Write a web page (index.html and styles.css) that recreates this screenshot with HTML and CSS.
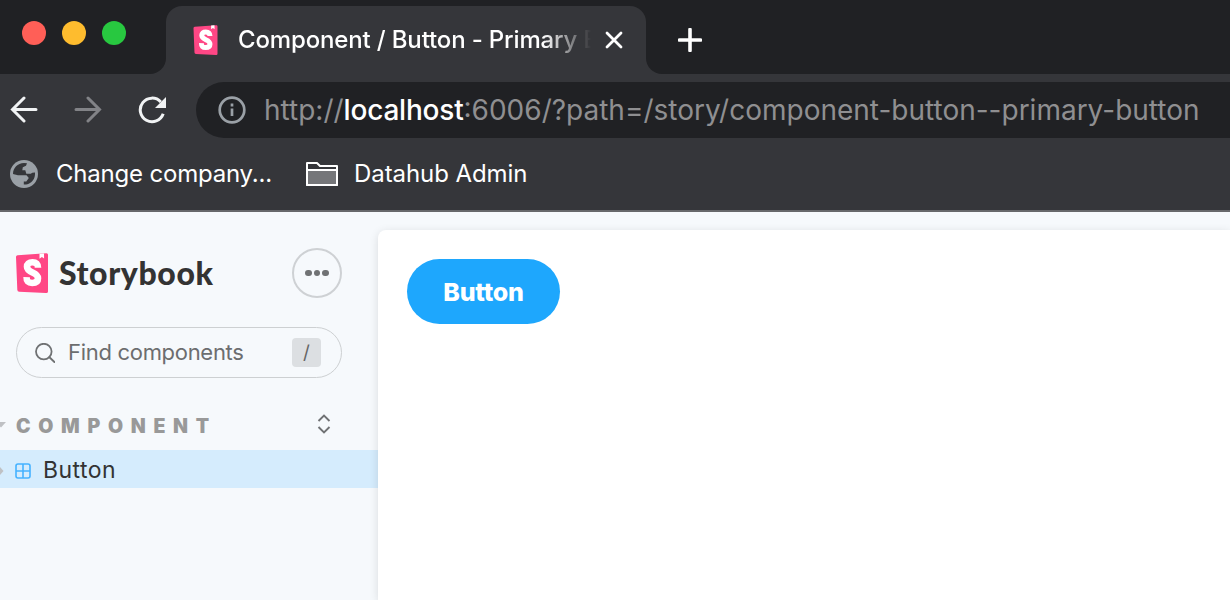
FILE: index.html
```html
<!DOCTYPE html>
<html lang="en">
<head>
<meta charset="utf-8">
<title>Component / Button - Primary Button</title>
<link rel="stylesheet" href="styles.css">
</head>
<body>
<header class="chrome">
  <div class="tabstrip">
    <div class="lights"><i class="light red"></i><i class="light amber"></i><i class="light green"></i></div>
    <div class="tab">
      <svg class="favicon" viewBox="0 0 32 40"><path fill="#ff4785" d="M1.6 2.2 30 .3a1.7 1.7 0 0 1 2 1.7v36a1.9 1.9 0 0 1-2 2L3.2 38.700a2 2 0 0 1-1.9-1.9L0 4.200a1.9 1.9 0 0 1 1.6-2Z"/><path fill="#fff" d="m23.500.7 4.500-.3.1 5.200-2.200-1.500-2.400 1.600Z"/><path class="mark" d="M22 14.800c0-4-1.800-5.500-5.500-5.500s-5.500 1.700-5.500 4.500c0 6.500 11 5 11 11.500 0 3.200-2.200 4.700-5.800 4.700-4 0-5.800-1.900-5.600-5.800"/></svg>
      <span class="tab-title">Component / Button - Primary B</span>
      <svg class="close" viewBox="0 0 18 18"><path d="M2 2 16 16M16 2 2 16"/></svg>
    </div>
    <div class="strip-rest"><svg class="plus" viewBox="0 0 24 24"><path d="M12 1.5v21M1.5 12h21"/></svg></div>
  </div>
  <div class="toolbar">
    <svg class="nav" viewBox="0 0 28 28"><path d="M26 13.500H3M14 2 2.500 13.500 14 25"/></svg>
    <svg class="nav dim" viewBox="0 0 28 28"><path d="M2 13.500h23M14 2 25.500 13.500 14 25"/></svg>
    <svg class="nav" viewBox="0 0 28 28"><path d="M22.800 6A11.800 11.800 0 1 0 25.200 17.800"/><path class="solid" d="M28 1v11H17Z"/></svg>
    <div class="omnibox">
      <svg class="info" viewBox="0 0 28 28"><circle cx="14" cy="14" r="12.3"/><path d="M14 12.500v7.500M14 7.500v3"/></svg>
      <span class="url">http://<b>localhost</b>:6006/?path=/story/component-button--primary-button</span>
    </div>
  </div>
  <div class="bookmarks">
    <svg class="globe" viewBox="0 0 28 28"><circle cx="14" cy="14" r="14" fill="#9aa0a6"/><path fill="#35363a" d="M3 14C3 8 7.500 3.300 14 3l3 .3-1 2.500-3.200 1.500-.5 3h3l1 3.500h4.500l1.500-1 2.700-.3c.3 5-1.700 8.500-5 10.500-2 1.200-4 1.700-6.200 1.500v-3h2.500l2.500-3.500-2.300-2.800H8Z"/></svg>
    <span class="bm-one">Change company...</span>
    <svg class="folder" viewBox="0 0 32 26"><path d="M1 24V2h10l3 3h17v19Z"/><path class="fill" d="M1 9h30v15H1Z"/></svg>
    <span class="bm-two">Datahub Admin</span>
  </div>
</header>
<main class="app">
  <aside class="sidebar">
    <div class="brand">
      <svg class="logo" viewBox="0 0 32 40"><path fill="#ff4785" d="M1.6 2.2 30 .3a1.7 1.7 0 0 1 2 1.7v36a1.9 1.9 0 0 1-2 2L3.2 38.700a2 2 0 0 1-1.9-1.9L0 4.200a1.9 1.9 0 0 1 1.6-2Z"/><path fill="#fff" d="m23.500.7 4.500-.3.1 5.200-2.200-1.500-2.400 1.600Z"/><path class="mark" d="M22 14.800c0-4-1.800-5.500-5.500-5.500s-5.500 1.700-5.500 4.500c0 6.500 11 5 11 11.500 0 3.200-2.200 4.700-5.800 4.700-4 0-5.800-1.900-5.600-5.800"/></svg>
      <span class="brand-name">Storybook</span>
      <button class="more"><i></i><i></i><i></i></button>
    </div>
    <div class="search">
      <svg class="lens" viewBox="0 0 20 20"><circle cx="8.8" cy="8.6" r="7.8"/><path d="m14.2 14 5.200 5"/></svg>
      <span class="placeholder">Find components</span>
      <kbd>/</kbd>
    </div>
    <div class="group">
      <svg class="caret" viewBox="0 0 6 6"><path d="M0 0h6L1 5.500 0 4.500Z"/></svg>
      <span class="group-name">COMPONENT</span>
      <svg class="expand" viewBox="0 0 14 20"><path d="M1.500 7 7 1.500 12.500 7M1.500 13 7 18.500l5.500-5.500"/></svg>
    </div>
    <div class="item">
      <svg class="caret" viewBox="0 0 4 8"><path d="m0 0 3.500 4L0 8Z"/></svg>
      <svg class="component" viewBox="0 0 16 16"><rect x="1" y="1" width="14" height="14" rx="2"/><path d="M8 1v14M1 8h14"/></svg>
      <span class="item-name">Button</span>
    </div>
  </aside>
  <section class="canvas"><button class="primary">Button</button></section>
</main>
</body>
</html>
```

FILE: styles.css
```css
* { box-sizing: border-box; }
body { margin: 0; width: 1230px; height: 600px; overflow: hidden; display: flex; flex-direction: column; font-family: Inter, "Liberation Sans", sans-serif; background: #f6f9fc; }
svg { display: block; flex: none; fill: none; }
span { white-space: nowrap; }
button { font-family: inherit; padding: 0; }
.chrome { height: 212px; flex: none; background: #35363a; border-bottom: 2px solid #67686b; color: #fff; }
.tabstrip { height: 74px; display: flex; }
.lights { width: 166px; padding: 21px 0 0 22px; display: flex; gap: 16px; background: #202124; border-bottom-right-radius: 16px; }
.light { width: 24px; height: 24px; border-radius: 50%; }
.red { background: #ff5f57; }
.amber { background: #febc2e; }
.green { background: #28c840; }
.tab { position: relative; width: 480px; display: flex; align-items: center; padding: 6px 23px 0 27px; background: linear-gradient(#202124, #202124) top / 100% 30px no-repeat; }
.tab::before { content: ""; position: absolute; inset: 6px 0 0; background: #35363a; border-radius: 16px 16px 0 0; }
.tab > * { position: relative; }
.favicon { width: 25px; height: 30px; }
.mark { stroke: #fff; stroke-width: 6.6; }
.tab-title { width: 366px; margin-left: 20px; font-size: 24px; font-weight: 450; letter-spacing: -0.15px; line-height: 32px; -webkit-mask-image: linear-gradient(90deg, #000 305px, transparent 353px); mask-image: linear-gradient(90deg, #000 305px, transparent 353px); }
.close { width: 18px; height: 18px; margin-left: 1px; stroke: #fff; stroke-width: 2.8; stroke-linecap: round; }
.strip-rest { flex: 1; padding: 28px 0 0 32px; background: #202124; border-bottom-left-radius: 16px; }
.plus { width: 24px; height: 24px; stroke: #fff; stroke-width: 3.6; stroke-linecap: round; }
.toolbar { height: 72px; display: flex; align-items: center; padding-left: 10px; }
.nav { width: 28px; height: 28px; margin-right: 36px; stroke: #f1f3f4; stroke-width: 3; stroke-linecap: round; }
.nav + .nav + .nav { margin-right: 30px; stroke-linecap: butt; }
.nav.dim { stroke: #828387; }
.nav .solid { fill: #f1f3f4; stroke: none; }
.omnibox { flex: 1; height: 56px; display: flex; align-items: center; padding-left: 22px; background: #202124; border-radius: 28px 0 0 28px; }
.info { width: 28px; height: 28px; stroke: #9aa0a6; stroke-width: 2.7; }
.url { margin-left: 18px; font-size: 28px; font-weight: 430; color: #8f8f91; }
.url b { color: #fff; font-weight: 450; letter-spacing: -0.2px; }
.bookmarks { height: 56px; display: flex; align-items: center; padding-left: 10px; font-size: 24px; font-weight: 430; letter-spacing: -0.08px; }
.globe { width: 28px; height: 28px; }
.bm-one { width: 216px; margin: -2px 0 0 18px; letter-spacing: -0.2px; }
.folder { width: 32px; height: 26px; margin-left: 34px; stroke: #fff; stroke-width: 2; stroke-linejoin: round; }
.folder .fill { fill: #757679; }
.bm-two { margin: -2px 0 0 16px; }
.app { flex: 1; display: flex; }
.sidebar { width: 378px; }
.brand { height: 50px; margin: 36px 36px 0 16px; display: flex; align-items: center; }
.logo { width: 32px; height: 40px; }
.brand-name { margin: -2px 0 0 11px; font-family: Lato, "Open Sans", sans-serif; font-weight: 900; font-size: 32px; letter-spacing: 0.6px; color: #333; }
.more { width: 50px; height: 50px; margin-left: auto; display: flex; align-items: center; justify-content: center; gap: 2px; border: 2px solid #ced1d4; border-radius: 50%; background: none; }
.more i { width: 6.5px; height: 6.5px; border-radius: 50%; background: #707274; }
.search { height: 51px; margin: 29px 36px 0 16px; padding: 0 20px 0 18px; display: flex; align-items: center; border: 1px solid #cdd0d2; border-radius: 26px; }
.lens { width: 20px; height: 20px; stroke: #6f7173; stroke-width: 1.8; stroke-linecap: round; }
.placeholder { margin: -1px 0 0 13px; font-size: 22px; letter-spacing: -0.3px; color: #6c6d6f; }
kbd { width: 29px; height: 29px; margin-left: auto; border-radius: 4px; background: #dcdfe2; color: #666; font: 19px/29px Inter, sans-serif; text-align: center; }
.group { height: 36px; margin-top: 29px; display: flex; align-items: center; }
.caret { width: 6px; height: 6px; fill: #bfc1c4; }
.group-name { margin: 2px 0 0 10px; font-size: 19.5px; font-weight: 900; letter-spacing: 7.7px; color: #999; }
.expand { width: 14px; height: 20px; margin: 0 47px 2px auto; stroke: #707274; stroke-width: 1.9; }
.item { height: 38px; margin-top: 7px; padding-top: 4px; display: flex; align-items: center; background: #d5ecfd; }
.item .caret { width: 4px; height: 8px; }
.component { width: 16px; height: 16px; margin-left: 11px; stroke: #45b2ff; stroke-width: 1.6; }
.item-name { margin: -3px 0 0 12px; font-size: 23px; letter-spacing: 0.45px; color: #333; }
.canvas { flex: 1; margin-top: 18px; padding: 29px; background: #fff; border-top-left-radius: 8px; box-shadow: 0 2px 10px rgba(0,0,0,.12); }
.primary { width: 153px; height: 65px; border: 0; border-radius: 33px; background: #1ea7fd; color: #fff; font-size: 25px; font-weight: 800; letter-spacing: -0.2px; }
```
